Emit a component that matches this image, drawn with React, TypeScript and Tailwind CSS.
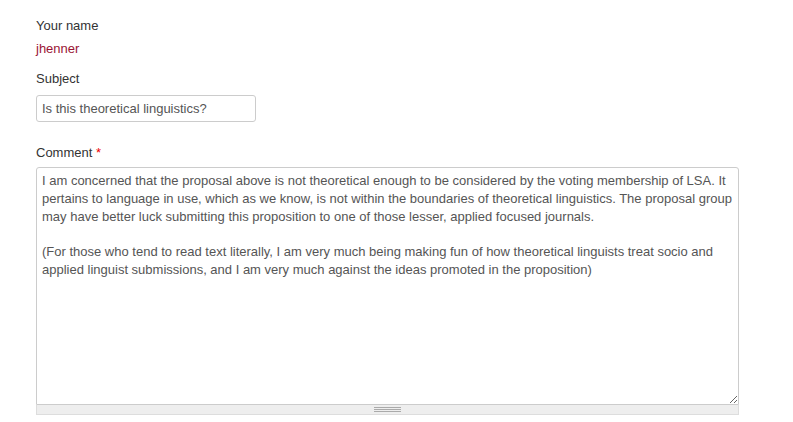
import React from "react";

const comment =
  "I am concerned that the proposal above is not theoretical enough to be considered by the voting membership of LSA. It pertains to language in use, which as we know, is not within the boundaries of theoretical linguistics. The proposal group may have better luck submitting this proposition to one of those lesser, applied focused journals.\n\n(For those who tend to read text literally, I am very much being making fun of how theoretical linguists treat socio and applied linguist submissions, and I am very much against the ideas promoted in the proposition)";

export default function App() {
  return (
    <div className="min-h-[422px] w-[793px] bg-white pl-9 pt-[17px] font-['Liberation_Sans',Arial,sans-serif] text-[13px] leading-[18px] text-[#333]">
      <div>Your name</div>
      <div className="mt-[5px] text-[#9a1434]">jhenner</div>

      <label className="mt-3 block">Subject</label>
      <input
        type="text"
        readOnly
        defaultValue="Is this theoretical linguistics?"
        className="mt-[7px] block h-[27px] w-[220px] rounded-[3px] border border-[#ccc] px-[5px] text-[13px] text-[#555] outline-none"
      />

      <label className="mt-[22px] block">
        Comment <span className="text-[#e00]">*</span>
      </label>
      <div className="mt-[5px] w-[703px]">
        <textarea
          readOnly
          defaultValue={comment}
          className="block h-[238px] w-full resize-y rounded-t-[3px] border border-[#ccc] px-[5px] py-[4px] text-[13px] leading-[17.8px] text-[#555] outline-none"
        />
        <div className="flex h-[10px] items-center justify-center border border-t-0 border-[#ddd] bg-[#eee]">
          <div className="flex w-[27px] flex-col gap-[1px]">
            <div className="h-px bg-[#aaa]" />
            <div className="h-px bg-[#aaa]" />
            <div className="h-px bg-[#aaa]" />
          </div>
        </div>
      </div>
    </div>
  );
}
